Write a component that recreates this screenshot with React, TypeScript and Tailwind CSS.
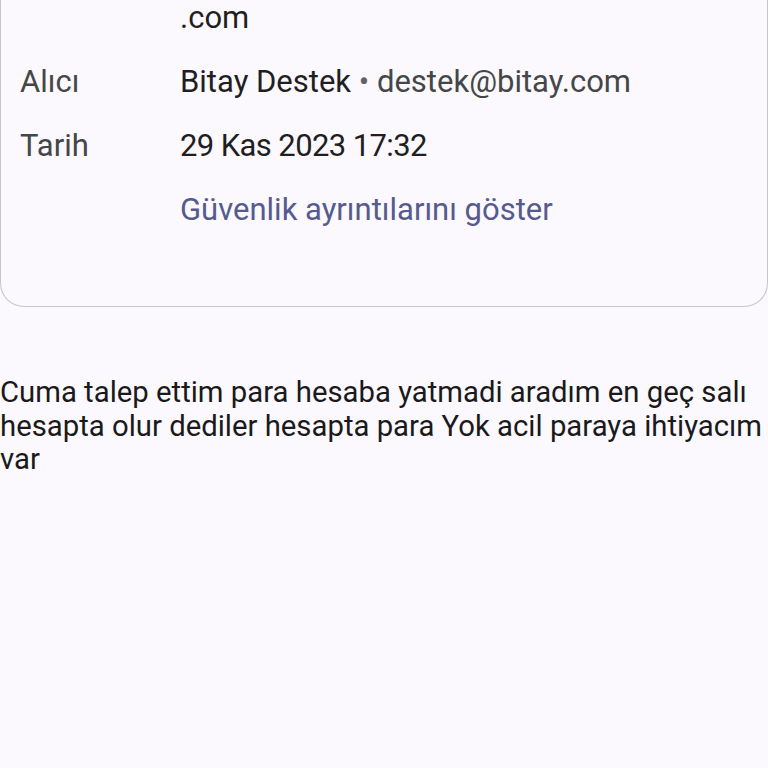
export default function App() {
  const rows = [
    { label: '', value: <span>.com</span> },
    {
      label: 'Alıcı',
      value: (
        <span>
          Bitay Destek <span className="text-[#5f6368]">•</span> <span className="text-[#444746]">destek@bitay.com</span>
        </span>
      ),
    },
    { label: 'Tarih', value: <span className="tracking-[-0.6px]">29 Kas 2023 17:32</span> },
    { label: '', value: <span className="text-[#565b8f]">Güvenlik ayrıntılarını göster</span> },
  ];

  return (
    <div className="min-h-[768px] w-[768px] bg-[#fbf8fe] overflow-hidden" style={{ fontFamily: 'Roboto, "Noto Sans", sans-serif' }}>
      <div className="-mt-[14px] border-x border-b border-[#c7c6cc] rounded-b-[24px] pb-[64px]">
        {rows.map((row, i) => (
          <div key={i} className="flex h-[64px] items-center text-[31px] leading-[64px]">
            <div className="w-[179px] shrink-0 pl-[19px] text-[#444746]">{row.label}</div>
            <div className="text-[#1f1f1f]">{row.value}</div>
          </div>
        ))}
      </div>
      <p className="mt-[69px] text-[29.3px] leading-[33.5px] text-[#1a1a1a]">
        Cuma talep ettim para hesaba yatmadi aradım en geç salı hesapta olur dediler hesapta para Yok acil paraya ihtiyacım var
      </p>
    </div>
  );
}
